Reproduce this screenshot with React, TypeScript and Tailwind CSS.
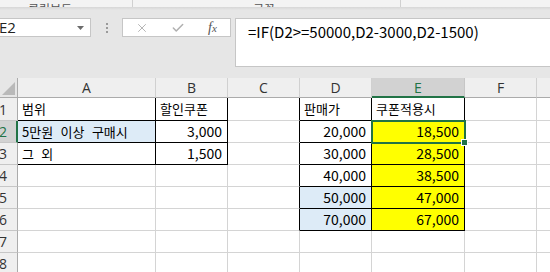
import { X, Check } from "lucide-react";

type Cell = {
  t?: string;
  num?: boolean;
  fill?: "blue" | "yellow";
  br?: boolean;
  bb?: boolean;
  sel?: boolean;
};

const colWidths = [
  "w-[138px]",
  "w-[72px]",
  "w-[72px]",
  "w-[72px]",
  "w-[93px]",
  "w-[72px]",
  "w-[60px]",
];
const colNames = ["A", "B", "C", "D", "E", "F", "G"];

const table: Cell[][] = [
  [
    { t: "범위", br: true, bb: true },
    { t: "할인쿠폰", br: true, bb: true },
    { br: true },
    { t: "판매가", br: true, bb: true },
    { t: "쿠폰적용시", br: true, bb: true },
    {},
    {},
  ],
  [
    { t: "5만원 이상 구매시", fill: "blue", br: true, bb: true },
    { t: "3,000", num: true, br: true, bb: true },
    { br: true },
    { t: "20,000", num: true, br: true, bb: true },
    { t: "18,500", num: true, fill: "yellow", br: true, bb: true, sel: true },
    {},
    {},
  ],
  [
    { t: "그 외", br: true, bb: true },
    { t: "1,500", num: true, br: true, bb: true },
    { br: true },
    { t: "30,000", num: true, br: true, bb: true },
    { t: "28,500", num: true, fill: "yellow", br: true, bb: true },
    {},
    {},
  ],
  [
    {},
    {},
    { br: true },
    { t: "40,000", num: true, br: true, bb: true },
    { t: "38,500", num: true, fill: "yellow", br: true, bb: true },
    {},
    {},
  ],
  [
    {},
    {},
    { br: true },
    { t: "50,000", num: true, fill: "blue", br: true, bb: true },
    { t: "47,000", num: true, fill: "yellow", br: true, bb: true },
    {},
    {},
  ],
  [
    {},
    {},
    { br: true },
    { t: "70,000", num: true, fill: "blue", br: true, bb: true },
    { t: "67,000", num: true, fill: "yellow", br: true, bb: true },
    {},
    {},
  ],
  [{}, {}, {}, {}, {}, {}, {}],
  [{}, {}, {}, {}, {}, {}, {}],
];

function SheetCell({ cell, width, height }: { cell: Cell; width: string; height: string }) {
  const bg =
    cell.fill === "blue"
      ? "bg-[#ddebf7]"
      : cell.fill === "yellow"
        ? "bg-[#ffff00]"
        : "bg-white";
  const right = cell.br ? "border-r-black" : "border-r-[#d4d4d4]";
  const bottom = cell.bb ? "border-b-black" : "border-b-[#d4d4d4]";
  return (
    <div
      className={`relative shrink-0 box-border border-r border-b ${right} ${bottom} ${bg} ${width} ${height} flex items-center ${
        cell.num
          ? "justify-end pr-[5px] text-[14px]"
          : "justify-start pl-[4px] text-[13px] [word-spacing:4.5px]"
      } text-black whitespace-nowrap`}
    >
      {cell.t}
      {cell.sel && (
        <div className="absolute -left-[1px] -top-[1px] w-[95px] h-[24px] border-2 border-[#217346] z-10">
          <div className="absolute -right-[4px] -bottom-[4px] w-[7px] h-[7px] bg-[#217346] border border-white" />
        </div>
      )}
    </div>
  );
}

export default function App() {
  return (
    <div
      className="w-[550px] h-[272px] overflow-hidden bg-[#e6e6e6] text-black"
      style={{ fontFamily: '"Noto Sans CJK KR", "Noto Sans", sans-serif' }}
    >
      {/* ribbon bottom edge, mostly scrolled away */}
      <div className="h-[7px] bg-[#f3f3f3] overflow-hidden flex items-end text-[12px] text-[#555] leading-none">
        <span className="ml-[28px] -mb-[8px] w-[92px]">클립보드</span>
        <span className="-mb-[8px] text-[9px] w-[12px]">↘</span>
        <span className="w-px h-full bg-[#d0d0d0]" />
        <span className="ml-[120px] -mb-[8px] w-[135px]">글꼴</span>
        <span className="-mb-[8px] text-[9px] w-[12px]">↘</span>
        <span className="w-px h-full bg-[#d0d0d0]" />
      </div>
      <div className="h-[3px] bg-gradient-to-b from-[#d6d6d6] to-[#e6e6e6]" />

      {/* formula bar row */}
      <div className="flex items-start mt-[8px] h-[49px]">
        <div className="w-[91px] h-[19px] bg-white border border-[#c6c6c6] border-l-0 flex items-center justify-between pr-[6px]">
          <span className="-ml-[1px] text-[15px] leading-none text-[#222]" style={{ fontFamily: '"Open Sans", sans-serif' }}>
            E2
          </span>
          <svg width="7" height="4" viewBox="0 0 7 4">
            <path d="M0 0h7L3.5 4z" fill="#6b6b6b" />
          </svg>
        </div>
        <div className="w-[31px] h-[19px] flex flex-col items-center justify-center gap-[2px] pt-[1px]">
          <span className="w-[2px] h-[2px] bg-[#9a9a9a]" />
          <span className="w-[2px] h-[2px] bg-[#9a9a9a]" />
          <span className="w-[2px] h-[2px] bg-[#9a9a9a]" />
        </div>
        <div className="w-[109px] h-[19px] bg-white border border-[#c6c6c6] flex items-center">
          <X className="ml-[12px] text-[#b0b0b0]" size={14} strokeWidth={1.6} />
          <Check className="ml-[22px] text-[#b0b0b0]" size={14} strokeWidth={2.6} />
          <span
            className="ml-[23px] text-[14px] italic text-[#555] leading-none"
            style={{ fontFamily: '"Liberation Serif", serif' }}
          >
            f<span className="text-[11px]">x</span>
          </span>
        </div>
        <div className="ml-[4px] flex-1 h-[49px] bg-white border border-[#c6c6c6] border-r-0 pl-[12px] pt-[1px] text-[15px] leading-[24px] whitespace-nowrap">
          =IF(D2&gt;=50000,D2-3000,D2-1500)
        </div>
      </div>

      <div className="h-[11px]" />

      {/* column headers */}
      <div className="flex h-[20px]">
        <div className="w-[18px] shrink-0 h-[20px] bg-[#e6e6e6] border-r border-b border-[#ababab] flex items-end justify-end p-[2px]">
          <svg width="13" height="13" viewBox="0 0 13 13">
            <path d="M13 0V13H0z" fill="#b9b9b9" />
          </svg>
        </div>
        {colNames.map((n, i) => (
          <div
            key={n}
            className={`shrink-0 ${colWidths[i]} h-[20px] box-border border-r flex items-center justify-center text-[14px] ${
              n === "E"
                ? "bg-[#d2d2d2] border-r-[#c6c6c6] border-b-2 border-b-[#217346] text-[#217346]"
                : "bg-[#efefef] border-r-[#d0d0d0] border-b border-b-[#ababab] text-[#333]"
            }`}
            style={{ fontFamily: '"Open Sans", sans-serif' }}
          >
            {n}
          </div>
        ))}
      </div>

      {/* rows */}
      {table.map((row, r) => {
        const h = r === 0 ? "h-[23px]" : "h-[22px]";
        return (
          <div key={r} className="flex">
            <div
              className={`w-[18px] shrink-0 ${h} overflow-hidden box-border border-b border-b-[#c6c6c6] ${
                r === 1
                  ? "bg-[#d2d2d2] border-r-2 border-r-[#217346] text-[#217346]"
                  : "bg-[#efefef] border-r border-r-[#ababab] text-[#333]"
              }`}
            >
              <div
                className="w-[30px] -ml-[12px] h-full flex items-center justify-center text-[14px]"
                style={{ fontFamily: '"Open Sans", sans-serif' }}
              >
                {r + 1}
              </div>
            </div>
            {row.map((cell, c) => (
              <SheetCell key={c} cell={cell} width={colWidths[c]} height={h} />
            ))}
          </div>
        );
      })}
    </div>
  );
}
